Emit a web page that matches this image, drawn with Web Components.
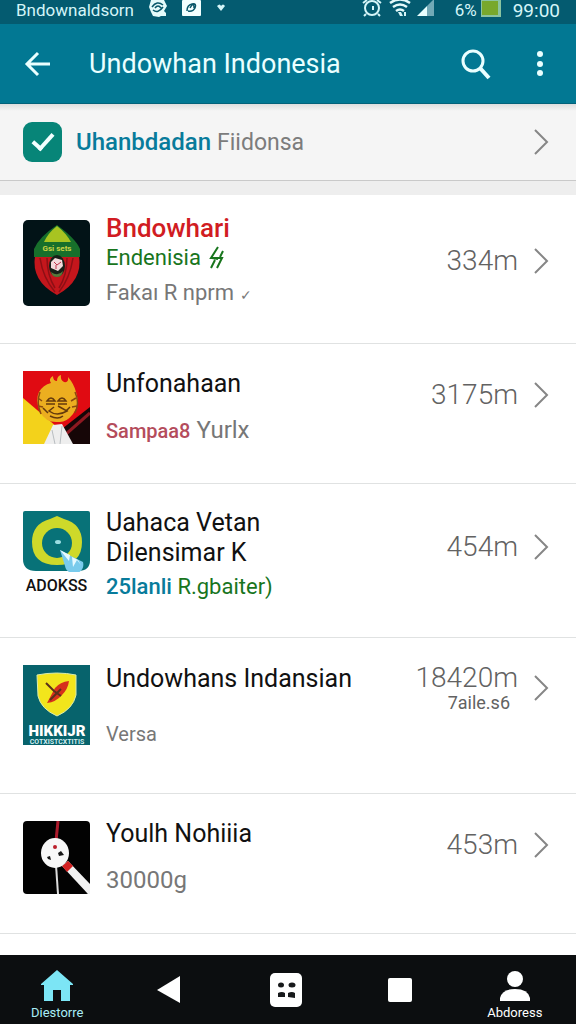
<!DOCTYPE html>
<html lang="id">
<head>
<meta charset="utf-8">
<meta name="viewport" content="width=device-width, initial-scale=1">
<title>Undowhan Indonesia</title>
<style>
	body {
		background: #fff;
		font-family: Roboto, "Liberation Sans", sans-serif;
		margin: 0;
	}
</style>
</head>
<body>
<place-app></place-app>

<script>
/* global HTMLElement */

const define = (name, html) => {
	const template = document.createElement('template');
	template.innerHTML = html;

	window.customElements.define(name, class extends HTMLElement {
		constructor() {
			super();
			this.attachShadow({ mode: 'open' }).appendChild(template.content.cloneNode(true));
		}
	});
};

define('status-bar', `
	<style>
	:host {
		align-items: flex-start;
		background: #045b70;
		box-sizing: border-box;
		color: #d5f5f8;
		display: flex;
		font-size: 17px;
		height: 24px;
		justify-content: space-between;
		line-height: 20px;
		padding: 0 16px;
	}
	div {
		display: flex;
	}
	svg {
		display: block;
		height: 18px;
	}
	.left {
		gap: 15px;
	}
	.right {
		gap: 6px;
	}
	.time {
		font-size: 19px;
		line-height: 22px;
		margin-left: 6px;
	}
	.percent {
		margin-left: 14px;
		margin-right: -2px;
	}
	</style>
	<div class="left">
		<span>Bndownaldsorn</span>
		<svg width="18" viewBox="0 0 18 18"><path d="M2 0h13l3 6-3 5 2 2v3h-5l-2 1-6-1-2-4-2-5z" fill="#e4fbfb"/><path d="M3 7q5-7 11-2M4 10q5 4 10-3M6 8q3-4 6 0" fill="none" stroke="#07576a" stroke-width="1.5"/></svg>
		<svg width="19" viewBox="0 0 19 18"><rect width="19" height="16" rx="1" fill="#f2ffff"/><path d="M5 11q0-6 5-7 5-1 3 4-2 4-7 3M8 8q4-7 4 0" fill="none" stroke="#07576a" stroke-width="1.5"/></svg>
		<svg width="12" viewBox="0 0 12 18"><path d="M1 6q3-3 4 0 2-3 4 0l-4 5z" fill="#d5f5f8"/></svg>
	</div>
	<div class="right">
		<svg width="22" viewBox="0 0 22 18"><circle cx="11" cy="8" r="7" fill="none" stroke="#d5f5f8" stroke-width="2"/><path d="M12 6v4M2 3l4-3M16 0l4 3M5 14l-2 2M17 14l2 2" fill="none" stroke="#d5f5f8" stroke-width="2"/></svg>
		<svg width="22" viewBox="0 0 22 18"><path d="M1 3q10-7 20 0M4 7q7-5 14 0M7 11q4-3 8 0" fill="none" stroke="#e4fbfb" stroke-width="2.5"/><path d="M9 12h3l2 4h-3zM15 12h2v4h-2z" fill="#d5f5f8"/></svg>
		<svg width="18" viewBox="0 0 18 18"><path d="M0 16 10 6v10z" fill="#e8ffff"/><path d="m10 6 7-7v17h-7z" fill="#72a9b6"/></svg>
		<span class="percent">6%</span>
		<svg width="20" viewBox="0 0 20 18"><path d="M0 0h20v17H0z" fill="#8bc4a0"/><path d="M1 1h16v14H1z" fill="#78a82c"/></svg>
		<span class="time">99:00</span>
	</div>
`);

define('app-bar', `
	<style>
	:host {
		align-items: center;
		background: #027893;
		border-bottom: 1px solid #03627a;
		box-sizing: border-box;
		color: #eaffff;
		display: flex;
		height: 80px;
		padding: 0 28px 0 21px;
	}
	h1 {
		flex: 1;
		font-size: 27px;
		font-weight: 400;
		line-height: 32px;
		margin: 0 0 0 34px;
	}
	button {
		background: none;
		border: 0;
		color: inherit;
		cursor: pointer;
		display: block;
		padding: 0;
	}
	.search {
		margin-right: 40px;
	}
	svg {
		display: block;
		fill: none;
		stroke: currentColor;
		stroke-width: 3;
	}
	</style>
	<button aria-label="Back"><svg width="34" height="32" viewBox="0 0 34 32"><path d="M29 16H7M17 5 6 16l11 11" stroke-width="3"/></svg></button>
	<h1><slot></slot></h1>
	<button class="search" aria-label="Search"><svg width="32" height="32" viewBox="0 0 32 32"><circle cx="13" cy="13" r="10"/><path d="m20 20 9 10" stroke-width="4"/></svg></button>
	<button aria-label="More"><svg width="16" height="32" viewBox="0 0 16 32"><g fill="currentColor" stroke="none"><circle cx="8" cy="6" r="3"/><circle cx="8" cy="16" r="3"/><circle cx="8" cy="25" r="3"/></g></svg></button>
`);

define('chevron-icon', `
	<style>
	:host {
		color: #868686;
		display: block;
		flex: none;
	}
	svg {
		display: block;
	}
	</style>
	<svg width="15" height="26" viewBox="0 0 15 26"><path d="m1 1 12 12L1 25" fill="none" stroke="currentColor" stroke-width="2"/></svg>
`);

define('filter-bar', `
	<style>
	:host {
		align-items: center;
		background: linear-gradient(#dedede, #f5f5f5 7px);
		border-bottom: 1px solid #c9c9c9;
		box-sizing: border-box;
		color: #7c7c7c;
		display: flex;
		font-size: 24px;
		height: 77px;
		justify-content: space-between;
		line-height: 30px;
		padding: 0 27px 0 23px;
	}
	label {
		align-items: center;
		display: flex;
		gap: 14px;
	}
	input {
		appearance: none;
		background: #078578;
		border-radius: 9px;
		display: grid;
		height: 40px;
		margin: 0;
		place-items: center;
		width: 39px;
	}
	input:checked::after {
		border: solid #f2ffff;
		border-width: 0 4px 4px 0;
		content: "";
		height: 17px;
		margin-bottom: 6px;
		transform: rotate(42deg);
		width: 8px;
	}
	</style>
	<label><input type="checkbox" checked><span><slot></slot></span></label>
	<chevron-icon></chevron-icon>
`);

define('place-row', `
	<style>
	:host {
		--meta-top: 36px;
		--sub-gap: 16px;
		--text-top: 25px;
		--thumb-top: 27px;
		border-bottom: 1px solid #e0e2e2;
		box-sizing: border-box;
		display: block;
		min-height: 140px;
	}
	:host([lines="3"]) {
		--meta-top: 48px;
		--sub-gap: 4px;
		--text-top: 24px;
		min-height: 154px;
	}
	:host([lines="tall"]) {
		--meta-top: 25px;
		--sub-gap: 25px;
		--text-top: 26px;
		min-height: 156px;
	}
	:host([lines="lead"]) {
		--meta-top: 51px;
		--sub-gap: 5px;
		--text-top: 18px;
		--thumb-top: 25px;
		min-height: 149px;
	}
	a {
		align-items: flex-start;
		color: #111;
		display: flex;
		gap: 16px;
		padding: 0 27px 0 23px;
		text-decoration: none;
	}
	.thumb {
		flex: none;
		padding-top: var(--thumb-top);
		width: 67px;
	}
	.text {
		flex: 1;
		font-size: 25px;
		line-height: 30px;
		min-width: 0;
		padding-top: var(--text-top);
	}
	.sub {
		color: #777;
		font-size: 22px;
		margin-top: var(--sub-gap);
	}
	.meta {
		align-items: center;
		display: flex;
		gap: 16px;
		padding-top: var(--meta-top);
	}
	.value {
		color: #626262;
		font-size: 28px;
		font-weight: 300;
		line-height: 30px;
		text-align: right;
	}
	</style>
	<a href="#">
		<div class="thumb"><slot name="thumb"></slot></div>
		<div class="text">
			<slot></slot>
			<div class="sub"><slot name="sub"></slot></div>
		</div>
		<div class="meta">
			<div class="value"><slot name="value"></slot></div>
			<chevron-icon></chevron-icon>
		</div>
	</a>
`);

define('nav-bar', `
	<style>
	:host {
		background: #0c0e10;
		box-sizing: border-box;
		display: grid;
		grid-template-columns: repeat(5, 1fr);
		height: 69px;
		padding-right: 4px;
	}
	button {
		align-items: center;
		background: none;
		border: 0;
		color: #fff;
		cursor: pointer;
		display: flex;
		flex-direction: column;
		font: 13px/16px Roboto, "Liberation Sans", sans-serif;
		gap: 3px;
		justify-content: center;
		padding: 0;
	}
	.labelled {
		justify-content: flex-end;
		padding-bottom: 3px;
	}
	.current {
		color: #a9edf6;
	}
	svg {
		display: block;
		fill: currentColor;
	}
	.current svg {
		color: #7ce5f5;
	}
	</style>
	<button class="labelled current"><svg width="34" height="32" viewBox="0 0 34 32"><path d="M17 0 33 14v1h-3v16h-9V20h-8v11H4V15H1v-1z"/></svg>Diestorre</button>
	<button aria-label="Back"><svg width="34" height="30" viewBox="0 0 34 30"><path d="M2 15 25 1v27z"/></svg></button>
	<button aria-label="Apps"><svg width="34" height="34" viewBox="0 0 34 34"><rect x="1" width="32" height="34" rx="5"/><g fill="#17191b"><ellipse cx="12" cy="12" rx="3" ry="2.5"/><ellipse cx="23" cy="12" rx="3.5" ry="2.5"/><path d="M9 20q4-2 7 0v4H9zM19 20q4-2 7 0v5l-7-1z"/></g></svg></button>
	<button aria-label="Recent"><svg width="26" height="26" viewBox="0 0 26 26"><rect x="1" y="1" width="24" height="24" rx="2"/></svg></button>
	<button class="labelled"><svg width="32" height="32" viewBox="0 0 32 32"><circle cx="16" cy="9" r="8"/><path d="M1 31v-3q2-9 15-9t15 9v3z"/></svg>Abdoress</button>
`);

define('place-app', `
	<style>
	:host {
		display: flex;
		flex-direction: column;
		min-height: 100vh;
	}
	main {
		border-top: 14px solid #eee;
		flex: 1;
	}
	svg {
		display: block;
	}
	.primary {
		color: #087b9b;
		font-weight: 500;
	}
	.muted {
		font-size: 23px;
	}
	.hot {
		color: #d11c22;
		font-size: 26px;
		font-weight: 500;
	}
	.green {
		color: #18751d;
	}
	.second {
		align-items: center;
		display: flex;
		font-size: 22px;
		gap: 8px;
	}
	.rose {
		color: #b44c5c;
		font-size: 20px;
		font-weight: 500;
	}
	.large {
		font-size: 24px;
	}
	.small {
		font-size: 20px;
	}
	.tick {
		font-size: 14px;
	}
	.note {
		font-size: 18px;
		font-weight: 400;
		line-height: 20px;
		padding-right: 8px;
	}
	.caption {
		color: #111;
		font-size: 16px;
		font-weight: 500;
		line-height: 20px;
		padding-top: 4px;
		text-align: center;
	}
	</style>
	<status-bar></status-bar>
	<app-bar>Undowhan Indonesia</app-bar>
	<filter-bar><span class="primary">Uhanbdadan</span> <span class="muted">Fiidonsa</span></filter-bar>
	<main>
		<place-row lines="lead">
			<svg slot="thumb" width="67" height="86" viewBox="0 0 67 86">
				<rect width="67" height="86" rx="5" fill="#021317"/>
				<path d="M12 36h44q4 25-22 39Q8 61 12 36z" fill="#c4161c"/>
				<path d="M17 38q3 20 15 34M50 38q-3 20-14 34M24 38q0 17 8 30M44 38q0 17-8 30" fill="none" stroke="#8d0f15" stroke-width="1.5"/>
				<path d="M34 5Q53 19 57 29v8H11v-8Q16 17 34 5z" fill="#176f2b"/>
				<path d="M34 6q9 7 14 16H21Q25 13 34 6z" fill="#a8c421"/>
				<text x="34" y="31" font-size="8" font-weight="700" fill="#cbd344" text-anchor="middle">Gsi sets</text>
				<ellipse cx="34" cy="46" rx="8" ry="11" fill="#172017"/>
				<path d="m28 42 4-4 7 2 1 6-5 5-7-3z" fill="#f2dada"/>
				<path d="m31 42 3 3 4-3m-5 3v4" stroke="#bd3448" fill="none"/>
				<path d="M28 52q7 5 12-1-1 6-6 6t-6-5z" fill="#56783a"/>
			</svg>
			<div class="hot">Bndowhari</div>
			<div class="green second">Endenisia
				<svg width="16" height="24" viewBox="0 0 16 24"><path d="M9 1 2 12h11L8 22M3 12l6 1M14 5l-3 6M6 14l-4 8" fill="none" stroke="currentColor" stroke-width="2"/></svg>
			</div>
			<span slot="sub">Fakaı R nprm <span class="tick">✓</span></span>
			<span slot="value">334m</span>
		</place-row>

		<place-row>
			<svg slot="thumb" width="67" height="73" viewBox="0 0 67 73">
				<path d="M0 0h67v73H0z" fill="#e00b12"/>
				<path d="m0 27 34 29-12 17H0z" fill="#f3d21b"/>
				<path d="m67 36-32 25 8 12h24z" fill="#160607"/>
				<path d="m67 42-24 21" stroke="#8e1921" stroke-width="3"/>
				<path d="m30 54 9-1 11 20H21z" fill="#eee"/>
				<path d="m29 59 3 14m7-18-2 18" stroke="#b8bdc0"/>
				<path d="M28 12q-3-4 2-7 0 5 4 5 0-5 4-6-1 5 3 7 5 1 4-5 6 7 8 15 4 12-3 22-7 9-15 8-12 1-18-10-5-12-1-20 4-7 12-9z" fill="#ecae20"/>
				<path d="M17 21q-4 11 1 22m34-22q5 11 0 21M15 27l4 3m-4 5 5 1m33-9-5 3m6 5-5 1" fill="none" stroke="#8a4a10" stroke-width="1.5"/>
				<path d="M24 30q4-6 8 0zm11 0q4-6 8 0zM23 33h9m3 0h9M31 36l-5 4q8 6 18 0l-9-5M27 45q8 4 13 0M20 37l5 5m22-6-5 5" fill="none" stroke="#643a0d" stroke-width="1.5"/>
			</svg>
			Unfonahaan
			<span slot="sub" class="large"><span class="rose">Sampaa8</span> Yurlx</span>
			<span slot="value">3175m</span>
		</place-row>

		<place-row lines="3">
			<div slot="thumb">
				<svg width="67" height="61" viewBox="0 0 67 61">
					<path d="M2 0h63q2 0 2 2v47q0 11-12 11H13Q0 60 0 48V2q0-2 2-2z" fill="#087278"/>
					<path d="m34 5 7 3q18 5 18 23 0 23-25 23Q9 54 9 31 9 13 27 8z" fill="#ced92a"/>
					<circle cx="34" cy="32" r="15" fill="#087278"/>
					<ellipse cx="35" cy="31" rx="3" ry="2" fill="#9bdde2"/>
					<path d="m37 39 11 6 12 6q2 8-7 12-10-1-11-8z" fill="#79cbec"/>
					<path d="m37 39 9 11 1-6zm12 7 1 10 4-7 4 5-3-5" fill="#e6faff"/>
				</svg>
				<div class="caption">ADOKSS</div>
			</div>
			<div>Uahaca Vetan</div>
			<div>Dilensimar K</div>
			<span slot="sub"><span class="primary">25lanli</span> <span class="green">R.gbaiter)</span></span>
			<span slot="value">454m</span>
		</place-row>

		<place-row lines="tall">
			<svg slot="thumb" width="67" height="80" viewBox="0 0 67 80">
				<path d="M0 0h67v80H0z" fill="#07636c"/>
				<path d="M14 10q20-4 39 0v20q-3 14-19 21-16-7-19-20z" fill="#f2e51c" stroke="#d7ebb0"/>
				<path d="M46 16q-9 1-14 7l-8 15q9-1 15-8 6-6 7-14z" fill="#d6301c"/>
				<path d="m23 18 8 8 7 5M27 35l11-11" fill="none" stroke="#59301c" stroke-width="2"/>
				<text x="34" y="71" font-size="15" font-weight="900" fill="#fff" text-anchor="middle">HIKKIJR</text>
				<text x="34" y="79" font-size="7" font-weight="700" fill="#d2eef0" text-anchor="middle">COTXISTCXTITIS</text>
			</svg>
			Undowhans Indansian
			<span slot="sub" class="small">Versa</span>
			<div slot="value">18420m<div class="note">7aile.s6</div></div>
		</place-row>

		<place-row>
			<svg slot="thumb" width="67" height="73" viewBox="0 0 67 73">
				<rect width="67" height="73" rx="4" fill="#020202"/>
				<path d="m35 0-2 20" stroke="#ac1b2c" stroke-width="3"/>
				<path d="m33 44 2 29" stroke="#ddd" stroke-width="2"/>
				<path d="m39 45 6-5 22 23v10h-2z" fill="#f1f1f1"/>
				<path d="m39 45 6-5 5 5-6 6z" fill="#d32223"/>
				<ellipse cx="32" cy="32" rx="14" ry="15" fill="#f8f8f8"/>
				<circle cx="32" cy="26" r="2" fill="#bc202c"/>
				<path d="m35 32 3-2 3 4-5 1zm-11 4 3-1 1 4-3-1z" fill="#171717"/>
			</svg>
			Youlh Nohiiia
			<span slot="sub" class="large">30000g</span>
			<span slot="value">453m</span>
		</place-row>
	</main>
	<nav-bar></nav-bar>
`);
</script>
</body>
</html>
